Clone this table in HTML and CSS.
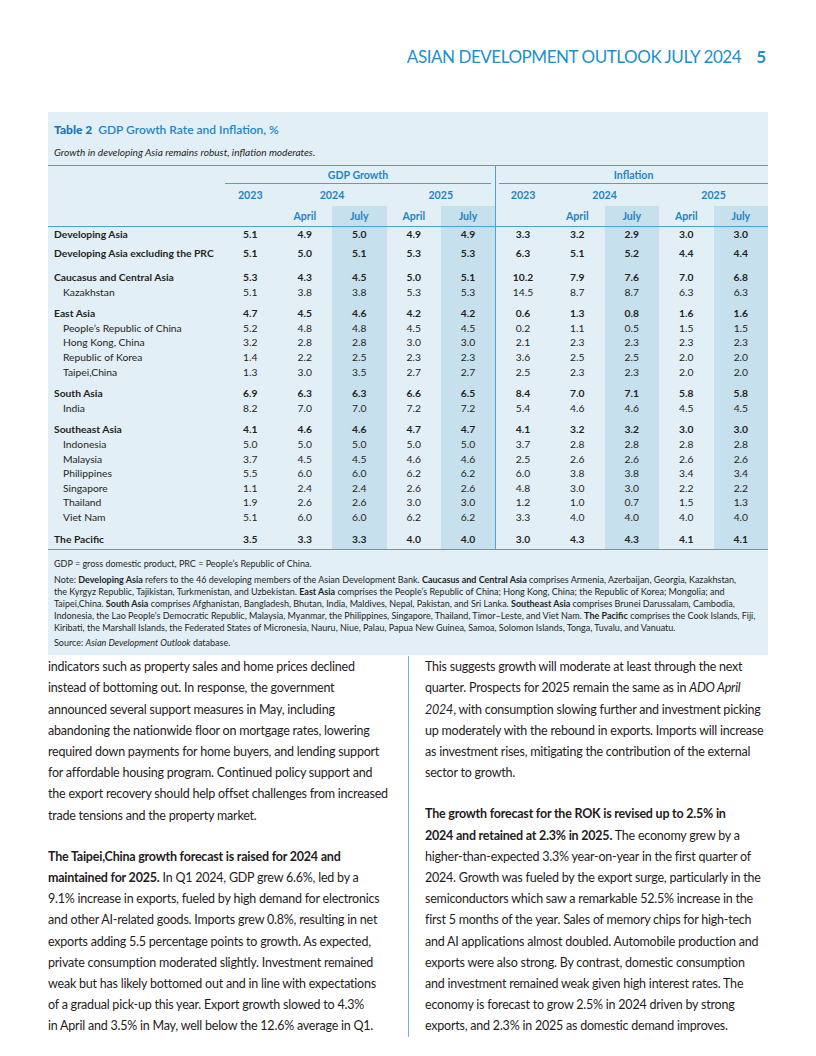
FILE: index.html
```html
<!DOCTYPE html>
<html lang="en">
<head>
<meta charset="utf-8">
<title>Asian Development Outlook July 2024 – page 5</title>
<link rel="stylesheet" href="styles.css">
</head>
<body>
<header class="running-head">
  <span class="rh-title">ASIAN DEVELOPMENT OUTLOOK JULY 2024</span>
  <span class="rh-page">5</span>
</header>

<section class="table-box">
  <h2 class="tbl-title"><span class="tbl-num">Table 2</span> GDP Growth Rate and Inflation, %</h2>
  <p class="tbl-sub">Growth in developing Asia remains robust, inflation moderates.</p>
  <table class="data">
    <colgroup>
      <col class="c-label">
      <col class="c-num"><col class="c-num"><col class="c-num"><col class="c-num"><col class="c-num">
      <col class="c-num"><col class="c-num"><col class="c-num"><col class="c-num"><col class="c-num">
    </colgroup>
    <thead>
      <tr class="h1">
        <th></th>
        <th colspan="5"><div class="grp-line gdp">GDP Growth</div></th>
        <th colspan="5" class="div"><div class="grp-line infl">Inflation</div></th>
      </tr>
      <tr class="h2">
        <th></th><th>2023</th><th colspan="2">2024</th><th colspan="2">2025</th>
        <th class="div">2023</th><th colspan="2">2024</th><th colspan="2">2025</th>
      </tr>
      <tr class="h3">
        <th></th><th></th><th>April</th><th class="jul">July</th><th>April</th><th class="jul">July</th>
        <th class="div"></th><th>April</th><th class="jul">July</th><th>April</th><th class="jul">July</th>
      </tr>
    </thead>
    <tbody>
      <tr class="reg"><td>Developing Asia</td><td>5.1</td><td>4.9</td><td class="jul">5.0</td><td>4.9</td><td class="jul">4.9</td><td class="div">3.3</td><td>3.2</td><td class="jul">2.9</td><td>3.0</td><td class="jul">3.0</td></tr>
      <tr class="reg gs"><td>Developing Asia excluding the PRC</td><td>5.1</td><td>5.0</td><td class="jul">5.1</td><td>5.3</td><td class="jul">5.3</td><td class="div">6.3</td><td>5.1</td><td class="jul">5.2</td><td>4.4</td><td class="jul">4.4</td></tr>
      <tr class="reg gl"><td>Caucasus and Central Asia</td><td>5.3</td><td>4.3</td><td class="jul">4.5</td><td>5.0</td><td class="jul">5.1</td><td class="div">10.2</td><td>7.9</td><td class="jul">7.6</td><td>7.0</td><td class="jul">6.8</td></tr>
      <tr><td>Kazakhstan</td><td>5.1</td><td>3.8</td><td class="jul">3.8</td><td>5.3</td><td class="jul">5.3</td><td class="div">14.5</td><td>8.7</td><td class="jul">8.7</td><td>6.3</td><td class="jul">6.3</td></tr>
      <tr class="reg g"><td>East Asia</td><td>4.7</td><td>4.5</td><td class="jul">4.6</td><td>4.2</td><td class="jul">4.2</td><td class="div">0.6</td><td>1.3</td><td class="jul">0.8</td><td>1.6</td><td class="jul">1.6</td></tr>
      <tr><td>People’s Republic of China</td><td>5.2</td><td>4.8</td><td class="jul">4.8</td><td>4.5</td><td class="jul">4.5</td><td class="div">0.2</td><td>1.1</td><td class="jul">0.5</td><td>1.5</td><td class="jul">1.5</td></tr>
      <tr><td>Hong Kong, China</td><td>3.2</td><td>2.8</td><td class="jul">2.8</td><td>3.0</td><td class="jul">3.0</td><td class="div">2.1</td><td>2.3</td><td class="jul">2.3</td><td>2.3</td><td class="jul">2.3</td></tr>
      <tr><td>Republic of Korea</td><td>1.4</td><td>2.2</td><td class="jul">2.5</td><td>2.3</td><td class="jul">2.3</td><td class="div">3.6</td><td>2.5</td><td class="jul">2.5</td><td>2.0</td><td class="jul">2.0</td></tr>
      <tr><td>Taipei,China</td><td>1.3</td><td>3.0</td><td class="jul">3.5</td><td>2.7</td><td class="jul">2.7</td><td class="div">2.5</td><td>2.3</td><td class="jul">2.3</td><td>2.0</td><td class="jul">2.0</td></tr>
      <tr class="reg g"><td>South Asia</td><td>6.9</td><td>6.3</td><td class="jul">6.3</td><td>6.6</td><td class="jul">6.5</td><td class="div">8.4</td><td>7.0</td><td class="jul">7.1</td><td>5.8</td><td class="jul">5.8</td></tr>
      <tr><td>India</td><td>8.2</td><td>7.0</td><td class="jul">7.0</td><td>7.2</td><td class="jul">7.2</td><td class="div">5.4</td><td>4.6</td><td class="jul">4.6</td><td>4.5</td><td class="jul">4.5</td></tr>
      <tr class="reg g"><td>Southeast Asia</td><td>4.1</td><td>4.6</td><td class="jul">4.6</td><td>4.7</td><td class="jul">4.7</td><td class="div">4.1</td><td>3.2</td><td class="jul">3.2</td><td>3.0</td><td class="jul">3.0</td></tr>
      <tr><td>Indonesia</td><td>5.0</td><td>5.0</td><td class="jul">5.0</td><td>5.0</td><td class="jul">5.0</td><td class="div">3.7</td><td>2.8</td><td class="jul">2.8</td><td>2.8</td><td class="jul">2.8</td></tr>
      <tr><td>Malaysia</td><td>3.7</td><td>4.5</td><td class="jul">4.5</td><td>4.6</td><td class="jul">4.6</td><td class="div">2.5</td><td>2.6</td><td class="jul">2.6</td><td>2.6</td><td class="jul">2.6</td></tr>
      <tr><td>Philippines</td><td>5.5</td><td>6.0</td><td class="jul">6.0</td><td>6.2</td><td class="jul">6.2</td><td class="div">6.0</td><td>3.8</td><td class="jul">3.8</td><td>3.4</td><td class="jul">3.4</td></tr>
      <tr><td>Singapore</td><td>1.1</td><td>2.4</td><td class="jul">2.4</td><td>2.6</td><td class="jul">2.6</td><td class="div">4.8</td><td>3.0</td><td class="jul">3.0</td><td>2.2</td><td class="jul">2.2</td></tr>
      <tr><td>Thailand</td><td>1.9</td><td>2.6</td><td class="jul">2.6</td><td>3.0</td><td class="jul">3.0</td><td class="div">1.2</td><td>1.0</td><td class="jul">0.7</td><td>1.5</td><td class="jul">1.3</td></tr>
      <tr><td>Viet Nam</td><td>5.1</td><td>6.0</td><td class="jul">6.0</td><td>6.2</td><td class="jul">6.2</td><td class="div">3.3</td><td>4.0</td><td class="jul">4.0</td><td>4.0</td><td class="jul">4.0</td></tr>
      <tr class="reg g last"><td>The Pacific</td><td>3.5</td><td>3.3</td><td class="jul">3.3</td><td>4.0</td><td class="jul">4.0</td><td class="div">3.0</td><td>4.3</td><td class="jul">4.3</td><td>4.1</td><td class="jul">4.1</td></tr>
    </tbody>
  </table>
  <div class="notes">
    <p>GDP = gross domestic product, PRC = People’s Republic of China.</p>
    <p>Note: <b>Developing Asia</b> refers to the 46 developing members of the Asian Development Bank. <b>Caucasus and Central Asia</b> comprises Armenia, Azerbaijan, Georgia, Kazakhstan,<br>the Kyrgyz Republic, Tajikistan, Turkmenistan, and Uzbekistan. <b>East Asia</b> comprises the People’s Republic of China; Hong Kong, China; the Republic of Korea; Mongolia; and<br>Taipei,China. <b>South Asia</b> comprises Afghanistan, Bangladesh, Bhutan, India, Maldives, Nepal, Pakistan, and Sri Lanka. <b>Southeast Asia</b> comprises Brunei Darussalam, Cambodia,<br>Indonesia, the Lao People’s Democratic Republic, Malaysia, Myanmar, the Philippines, Singapore, Thailand, Timor–Leste, and Viet Nam. <b>The Pacific</b> comprises the Cook Islands, Fiji,<br>Kiribati, the Marshall Islands, the Federated States of Micronesia, Nauru, Niue, Palau, Papua New Guinea, Samoa, Solomon Islands, Tonga, Tuvalu, and Vanuatu.</p>
    <p>Source: <i>Asian Development Outlook</i> database.</p>
  </div>
</section>

<main class="body-cols">
  <div class="col col-left">
    <p>indicators such as property sales and home prices declined<br>instead of bottoming out. In response, the government<br>announced several support measures in May, including<br>abandoning the nationwide floor on mortgage rates, lowering<br>required down payments for home buyers, and lending support<br>for affordable housing program. Continued policy support and<br>the export recovery should help offset challenges from increased<br>trade tensions and the property market.</p>
    <p><b>The Taipei,China growth forecast is raised for 2024 and<br>maintained for 2025.</b> In Q1 2024, GDP grew 6.6%, led by a<br>9.1% increase in exports, fueled by high demand for electronics<br>and other AI-related goods. Imports grew 0.8%, resulting in net<br>exports adding 5.5 percentage points to growth. As expected,<br>private consumption moderated slightly. Investment remained<br>weak but has likely bottomed out and in line with expectations<br>of a gradual pick-up this year. Export growth slowed to 4.3%<br>in April and 3.5% in May, well below the 12.6% average in Q1.</p>
  </div>
  <div class="col col-right">
    <p>This suggests growth will moderate at least through the next<br>quarter. Prospects for 2025 remain the same as in <i>ADO April<br>2024</i>, with consumption slowing further and investment picking<br>up moderately with the rebound in exports. Imports will increase<br>as investment rises, mitigating the contribution of the external<br>sector to growth.</p>
    <p><b>The growth forecast for the ROK is revised up to 2.5% in<br>2024 and retained at 2.3% in 2025.</b> The economy grew by a<br>higher-than-expected 3.3% year-on-year in the first quarter of<br>2024. Growth was fueled by the export surge, particularly in the<br>semiconductors which saw a remarkable 52.5% increase in the<br>first 5 months of the year. Sales of memory chips for high-tech<br>and AI applications almost doubled. Automobile production and<br>exports were also strong. By contrast, domestic consumption<br>and investment remained weak given high interest rates. The<br>economy is forecast to grow 2.5% in 2024 driven by strong<br>exports, and 2.3% in 2025 as domestic demand improves.</p>
  </div>
</main>
</body>
</html>
```

FILE: styles.css
```css
* { box-sizing: border-box; }

body {
  margin: 0;
  width: 816px;
  background: #ffffff;
  color: #231f20;
  font-family: Lato, "Open Sans", sans-serif;
}

/* running head */
.running-head {
  display: flex;
  justify-content: flex-end;
  align-items: baseline;
  gap: 15px;
  padding: 47px 50px 0 0;
  color: #1b8fd0;
  line-height: 20px;
}
.rh-title {
  font-size: 17px;
  font-weight: 400;
  letter-spacing: -0.45px;
}
.rh-page {
  font-size: 17px;
  font-weight: 700;
}

/* table box */
.table-box {
  margin: 45px 48px 0;
  background: #e3eff7;
  padding-bottom: 6px;
}
.tbl-title {
  margin: 0;
  padding: 10px 6px 0;
  font-size: 12px;
  line-height: 16px;
  font-weight: 600;
  color: #1a86c8;
}
.tbl-num {
  font-weight: 900;
  color: #1775b9;
  margin-right: 3px;
}
.tbl-sub {
  margin: 8px 0 0;
  padding: 0 6px;
  font-size: 10.1px;
  line-height: 12px;
  font-style: italic;
  color: #231f20;
}

.data {
  margin-top: 7px;
  width: 720px;
  table-layout: fixed;
  border-collapse: collapse;
  border-top: 1.5px solid #4aa3d6;
  font-size: 10.3px;
}
.c-label { width: 175px; }
.c-num { width: 54.5px; }

.data th {
  padding: 0;
  color: #1d84c4;
  font-weight: 700;
  font-size: 10.6px;
  text-align: center;
}
.data .h1 th { height: 19px; vertical-align: middle; padding-top: 1px; }
.data .h2 th { height: 21px; }
.data .h3 th { height: 21px; }
.data .h3 { border-bottom: 1.5px solid #4aa3d6; }

.grp-line {
  border-bottom: 1.5px solid #4aa3d6;
  line-height: 16px;
}
.grp-line.gdp { margin: 0 4px 0 2px; }
.grp-line.infl { margin: 0 0 0 3px; }

.data .div { border-left: 1.5px solid #4aa3d6; }
.data .jul { background: #c7e0ed; }

.data td {
  padding: 0;
  height: 14.6px;
  line-height: 14.6px;
  text-align: center;
  color: #231f20;
  vertical-align: bottom;
}
.data td:first-child {
  text-align: left;
  padding-left: 15px;
}
.data tr.reg td { font-weight: 700; }
.data tr.reg td:first-child { padding-left: 6px; }
.data tr.g td { padding-top: 7px; height: 21.6px; }
.data tr.gs td { padding-top: 4.4px; height: 19px; }
.data tr.gl td { padding-top: 9.4px; height: 24px; }
.data tr.last { border-bottom: 1.5px solid #4aa3d6; }
.data tr.last td { padding-bottom: 3px; height: 24.6px; }

.notes {
  padding: 8px 6px 0;
  font-size: 9px;
  line-height: 12px;
  color: #231f20;
}
.notes p {
  margin: 0 0 3.5px;
  white-space: nowrap;
}
.notes p:last-child { margin-bottom: 0; }

/* body columns */
.body-cols {
  display: grid;
  grid-template-columns: 344px 360px;
  column-gap: 16px;
  margin: 1px 48px 0;
  font-size: 12.5px;
  line-height: 21.2px;
  letter-spacing: -0.22px;
  color: #1f1b1c;
}
.col p {
  margin: 0 0 20px;
  white-space: nowrap;
}
.col p:last-child { margin-bottom: 0; }
.col-right {
  border-left: 1px solid #6fb5db;
  padding-left: 16px;
}
```
